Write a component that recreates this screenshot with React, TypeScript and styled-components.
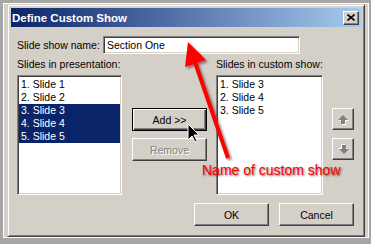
import React from "react";
import styled, { createGlobalStyle } from "styled-components";

const GlobalStyle = createGlobalStyle`
  html, body {
    margin: 0;
    padding: 0;
    background: #a6a6a6;
  }
  body {
    font-family: "Liberation Sans", Arial, sans-serif;
    font-size: 10.5px;
    color: #000;
  }
`;

const face = "#d4d0c8";

const Stage = styled.div`
  position: relative;
  width: 371px;
  height: 244px;
  overflow: hidden;
`;

const Frame = styled.div`
  position: absolute;
  left: 3px;
  top: 3px;
  width: 361px;
  height: 233px;
  border: 1px solid #fff;
  padding-left: 3px;
  background: ${face};
`;

const Window = styled.div`
  box-sizing: border-box;
  width: 358px;
  height: 233px;
  background: ${face};
  border: 1px solid;
  border-color: ${face} #404040 #404040 ${face};
  box-shadow: inset 1px 1px #fff, inset -1px -1px #808080;
  padding: 3px;
  display: flex;
  flex-direction: column;
`;

const TitleBar = styled.div`
  height: 19px;
  display: flex;
  align-items: center;
  justify-content: space-between;
  padding: 0 2px 0 1px;
  background: linear-gradient(to right, #0a246a, #a6caf0);
`;

const TitleText = styled.span`
  color: #fff;
  font-weight: bold;
  font-size: 11.5px;
`;

const CloseButton = styled.div`
  box-sizing: border-box;
  width: 16px;
  height: 14px;
  background: ${face};
  border: 1px solid;
  border-color: #fff #404040 #404040 #fff;
  box-shadow: inset -1px -1px #808080;
  display: flex;
  align-items: center;
  justify-content: center;
`;

const Body = styled.div`
  padding: 9px 0 0 6px;
  display: flex;
  flex-direction: column;
`;

const NameRow = styled.div`
  display: flex;
  align-items: center;
  height: 18px;
`;

const Label = styled.span<{ $width?: number }>`
  display: block;
  width: ${(p) => (p.$width ? `${p.$width}px` : "auto")};
  line-height: 13px;
  white-space: nowrap;
`;

const Sunken = styled.div`
  box-sizing: border-box;
  background: #fff;
  border: 1px solid;
  border-color: #808080 #fff #fff #808080;
  box-shadow: inset 1px 1px #404040, inset -1px -1px ${face};
`;

const NameInput = styled(Sunken)`
  width: 197px;
  height: 18px;
  padding: 2px 3px;
  line-height: 13px;
`;

const Columns = styled.div`
  margin-top: 4px;
  display: grid;
  grid-template-columns: 106px 75px 107px 22px;
  column-gap: 9px;
`;

const ListColumn = styled.div`
  display: flex;
  flex-direction: column;
  gap: 4px;
`;

const ListBox = styled(Sunken)<{ $width: number }>`
  width: ${(p) => p.$width}px;
  height: 120px;
  padding: 2px 1px;
`;

const ListItem = styled.div<{ $selected?: boolean }>`
  height: 13px;
  line-height: 13px;
  padding-left: 2px;
  background: ${(p) => (p.$selected ? "#0a246a" : "transparent")};
  color: ${(p) => (p.$selected ? "#fff" : "#000")};
`;

const ButtonColumn = styled.div`
  padding-top: 50px;
  display: flex;
  flex-direction: column;
  gap: 7px;
`;

const ArrowColumn = styled.div`
  padding-top: 50px;
  display: flex;
  flex-direction: column;
  gap: 8px;
`;

const Button = styled.div<{ $default?: boolean; $disabled?: boolean; $w?: number; $h?: number }>`
  box-sizing: border-box;
  width: ${(p) => p.$w ?? 75}px;
  height: ${(p) => p.$h ?? 23}px;
  background: ${face};
  border: 1px solid;
  border-color: ${(p) => (p.$default ? "#000" : "#fff #404040 #404040 #fff")};
  box-shadow: ${(p) =>
    p.$default
      ? "inset 1px 1px #fff, inset -1px -1px #404040, inset -2px -2px #808080"
      : "inset -1px -1px #808080"};
  display: flex;
  align-items: center;
  justify-content: center;
  color: ${(p) => (p.$disabled ? "#808080" : "#000")};
  text-shadow: ${(p) => (p.$disabled ? "1px 1px #fff" : "none")};
`;

const BottomRow = styled.div`
  margin-top: 8px;
  width: 337px;
  display: flex;
  justify-content: flex-end;
  gap: 10px;
`;

const Annotation = styled.span`
  position: absolute;
  left: 202px;
  top: 162px;
  color: #ff0000;
  font-family: "Liberation Sans", Arial, sans-serif;
  font-size: 14px;
  line-height: 17px;
  white-space: nowrap;
  text-shadow: 1px 1px 2px rgba(60, 40, 40, 0.75);
`;

const Overlay = styled.svg`
  position: absolute;
  left: 0;
  top: 0;
  pointer-events: none;
`;

function BlockArrow({ down }: { down?: boolean }) {
  const pts = "5,1 10,6 7,6 7,10 3,10 3,6 0,6";
  return (
    <svg width="11" height="11" viewBox="0 0 11 11">
      <g transform={down ? "rotate(180 5.5 5.5)" : undefined}>
        <polygon points={pts} fill="#fff" transform="translate(1 1)" />
        <polygon points={pts} fill="#808080" />
      </g>
    </svg>
  );
}

const leftItems = ["1. Slide 1", "2. Slide 2", "3. Slide 3", "4. Slide 4", "5. Slide 5"];
const rightItems = ["1. Slide 3", "2. Slide 4", "3. Slide 5"];

export default function App() {
  return (
    <>
      <GlobalStyle />
      <Stage>
        <Frame>
          <Window>
            <TitleBar>
              <TitleText>Define Custom Show</TitleText>
              <CloseButton>
                <svg width="8" height="7" viewBox="0 0 8 7">
                  <path d="M0.5 0.5 L7.5 6.5 M7.5 0.5 L0.5 6.5" stroke="#000" strokeWidth="1.6" />
                </svg>
              </CloseButton>
            </TitleBar>
            <Body>
              <NameRow>
                <Label $width={86}>Slide show name:</Label>
                <NameInput>Section One</NameInput>
              </NameRow>
              <Columns>
                <ListColumn>
                  <Label>Slides in presentation:</Label>
                  <ListBox $width={105}>
                    {leftItems.map((s, i) => (
                      <ListItem key={s} $selected={i >= 2}>
                        {s}
                      </ListItem>
                    ))}
                  </ListBox>
                </ListColumn>
                <ButtonColumn>
                  <Button $default>Add &gt;&gt;</Button>
                  <Button $disabled>Remove</Button>
                </ButtonColumn>
                <ListColumn>
                  <Label>Slides in custom show:</Label>
                  <ListBox $width={107}>
                    {rightItems.map((s) => (
                      <ListItem key={s}>{s}</ListItem>
                    ))}
                  </ListBox>
                </ListColumn>
                <ArrowColumn>
                  <Button $w={22} $h={22}>
                    <BlockArrow />
                  </Button>
                  <Button $w={22} $h={22}>
                    <BlockArrow down />
                  </Button>
                </ArrowColumn>
              </Columns>
              <BottomRow>
                <Button>OK</Button>
                <Button>Cancel</Button>
              </BottomRow>
            </Body>
          </Window>
        </Frame>
        <Overlay width="371" height="244" viewBox="0 0 371 244">
          <defs>
            <filter id="shadow" x="-20%" y="-20%" width="140%" height="140%">
              <feDropShadow dx="2" dy="2" stdDeviation="1.2" floodColor="#503030" floodOpacity="0.6" />
            </filter>
          </defs>
          <g filter="url(#shadow)">
            <line x1="195" y1="62" x2="228" y2="158" stroke="#ff0000" strokeWidth="4" />
            <polygon points="188,42 206,60 185,67" fill="#ff0000" />
          </g>
          <path
            d="M188 124 L188 140 L192 136 L195 142 L197 141 L194 135 L199 135 Z"
            fill="#000"
            stroke="#fff"
            strokeWidth="1"
          />
        </Overlay>
        <Annotation>Name of custom show</Annotation>
      </Stage>
    </>
  );
}
